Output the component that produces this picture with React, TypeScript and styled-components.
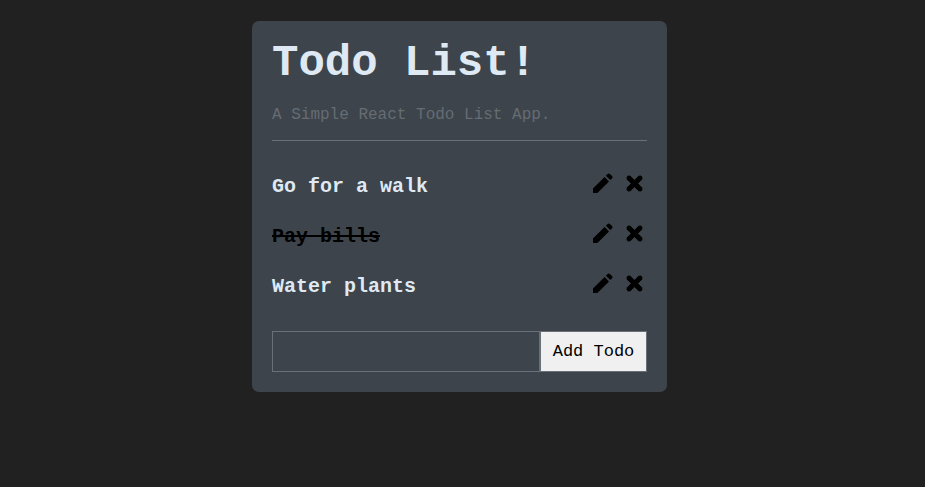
import React, { useState } from "react";
import styled, { createGlobalStyle } from "styled-components";

const GlobalStyle = createGlobalStyle`
  * { box-sizing: border-box; }
  body {
    margin: 0;
    background: #212121;
    font-family: "Courier New", "Liberation Mono", monospace;
    color: #dfe9f3;
  }
`;
const Page = styled.div`
  padding: 21px 22px 21px 16px;
`;
const Card = styled.main`
  max-width: 415px;
  margin: 0 auto;
  padding: 20px;
  border-radius: 7px;
  background: #3d444b;
`;
const Header = styled.header`
  border-bottom: 1px solid #6a7077;
  padding-bottom: 16px;
  margin-bottom: 20px;
`;
const Title = styled.h1`
  margin: 0 0 20px;
  font-size: 44px;
  line-height: 45px;
  font-weight: 700;
`;
const Subtitle = styled.p`
  margin: 0;
  font-size: 16px;
  line-height: 18px;
  color: #666c73;
`;
const List = styled.ul`
  list-style: none;
  margin: 0 0 20px;
  padding: 0;
`;
const Row = styled.li`
  display: flex;
  align-items: center;
  justify-content: space-between;
  height: 50px;
`;
const Label = styled.span<{ $done: boolean }>`
  font-size: 20px;
  font-weight: 700;
  color: ${(p) => (p.$done ? "#000" : "#dfe9f3")};
  text-decoration: ${(p) => (p.$done ? "line-through" : "none")};
`;
const Actions = styled.div`
  display: flex;
  gap: 8px;
  padding-bottom: 6px;
`;
const IconButton = styled.button`
  display: block;
  width: 24px;
  height: 24px;
  padding: 0;
  border: 0;
  background: none;
  color: #000;
  cursor: pointer;
`;
const Form = styled.form`
  display: flex;
`;
const Field = styled.input`
  flex: 1;
  min-width: 0;
  height: 41px;
  padding: 12px;
  border: 1px solid #6a7077;
  border-radius: 0;
  background: transparent;
  font: inherit;
  color: inherit;
`;
const AddButton = styled.button`
  height: 41px;
  width: 107px;
  padding: 0;
  border: 1px solid #6a7077;
  background: #f0f0f0;
  color: #000;
  font-family: inherit;
  font-size: 17px;
`;
const Pencil = () => (
  <svg width="24" height="24" viewBox="0 0 24 24" fill="currentColor" aria-hidden="true">
    <path d="M2 17.6V22h4.4L18 10.4 13.6 6 2 17.6z" />
    <path d="M14.9 4.7l1.7-1.7c.7-.7 1.6-.7 2.3 0l2.1 2.1c.7.7.7 1.6 0 2.3l-1.7 1.7-4.4-4.4z" />
  </svg>
);
const Cross = () => (
  <svg width="24" height="24" viewBox="0 0 24 24" fill="none" stroke="currentColor" strokeWidth="5" strokeLinejoin="round" aria-hidden="true">
    <path d="M5.2 6.2l12.6 12.6M17.8 6.2L5.2 18.8" />
    <path d="M5.8 6.8l11.4 11.4M17.2 6.8L5.8 18.2" strokeLinecap="round" strokeWidth="4.4" />
  </svg>
);

const initial = [
  { text: "Go for a walk", done: false },
  { text: "Pay bills", done: true },
  { text: "Water plants", done: false },
];

export default function App() {
  const [todos] = useState(initial);
  return (
    <Page>
      <GlobalStyle />
      <Card>
        <Header>
          <Title>Todo List!</Title>
          <Subtitle>A Simple React Todo List App.</Subtitle>
        </Header>
        <List>
          {todos.map((t) => (
            <Row key={t.text}>
              <Label $done={t.done}>{t.text}</Label>
              <Actions>
                <IconButton aria-label={`Edit ${t.text}`}><Pencil /></IconButton>
                <IconButton aria-label={`Delete ${t.text}`}><Cross /></IconButton>
              </Actions>
            </Row>
          ))}
        </List>
        <Form onSubmit={(e) => e.preventDefault()}>
          <Field aria-label="New todo" />
          <AddButton type="submit">Add Todo</AddButton>
        </Form>
      </Card>
    </Page>
  );
}
